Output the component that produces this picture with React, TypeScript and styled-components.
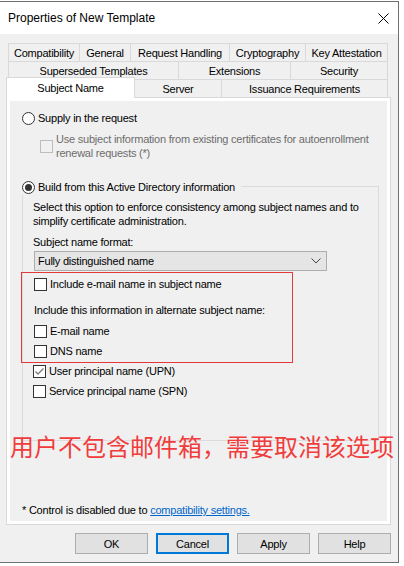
import React from "react";
import styled, { createGlobalStyle, css } from "styled-components";

const GlobalStyle = createGlobalStyle`
  html, body { margin: 0; padding: 0; background: #ffffff; }
  body {
    font-family: "Liberation Sans", Arial, sans-serif;
    font-size: 11px;
    letter-spacing: -0.22px;
    color: #000;
  }
  * { box-sizing: border-box; }
`;

const Screen = styled.div`
  padding-top: 1px;
  width: 404px;
  height: 566px;
  background: #fff;
`;

const Window = styled.div`
  position: relative;
  width: 399px;
  height: 562px;
  border-top: 1px solid #6f6f6f;
  border-right: 1px solid #6f6f6f;
  border-bottom: 1px solid #6f6f6f;
  display: flex;
  flex-direction: column;
  background: #f0f0f0;
`;

const TitleBar = styled.div`
  height: 32px;
  background: #fff;
  display: flex;
  align-items: center;
  justify-content: space-between;
  padding: 0 8px 0 8px;
  font-size: 12px;
  letter-spacing: 0;
`;

const CloseButton = styled.div`
  width: 12px;
  height: 12px;
  margin-right: 1px;
  display: flex;
  align-items: center;
  justify-content: center;
`;

const Body = styled.div`
  flex: 1;
  display: flex;
  flex-direction: column;
  padding: 9px 7px 8px 6px;
`;

const TabStrip = styled.div`
  display: flex;
  flex-direction: column;
  padding-left: 2px;
`;

const TabRow = styled.div`
  display: flex;
  height: 18px;
`;

const Tab = styled.div<{ $w: number; $selected?: boolean }>`
  width: ${(p) => p.$w}px;
  height: 18px;
  border: 1px solid #d9d9d9;
  border-bottom: none;
  margin-left: -1px;
  &:first-child { margin-left: 0; }
  display: flex;
  align-items: center;
  justify-content: center;
  background: #f0f0f0;
  white-space: nowrap;
  padding-top: 1px;
  ${(p) =>
    p.$selected &&
    css`
      &:first-child { margin-left: -2px; }
      margin-top: -2px;
      height: 21px;
      background: #fff;
      position: relative;
      z-index: 1;
      padding-top: 0;
    `}
`;

const Panel = styled.div`
  height: 428px;
  width: 385px;
  border: 1px solid #d9d9d9;
  background: #fff;
  padding: 3px;
`;

const Page = styled.div`
  height: 100%;
  background: #f0f0f0;
  display: flex;
  flex-direction: column;
  padding: 9px 0 4px 12px;
`;

const OptionRow = styled.div<{ $indent?: number; $mt?: number }>`
  display: flex;
  align-items: center;
  min-height: 16px;
  margin-left: ${(p) => p.$indent ?? 0}px;
  margin-top: ${(p) => p.$mt ?? 0}px;
`;

const Radio = styled.span<{ $checked?: boolean }>`
  width: 13px;
  height: 13px;
  border-radius: 50%;
  border: 1px solid #333;
  background: #fff;
  flex: none;
  display: flex;
  align-items: center;
  justify-content: center;
  &::after {
    content: "";
    display: ${(p) => (p.$checked ? "block" : "none")};
    width: 7px;
    height: 7px;
    border-radius: 50%;
    background: #333;
  }
`;

const Box = styled.span<{ $disabled?: boolean }>`
  width: 13px;
  height: 13px;
  border: 1px solid ${(p) => (p.$disabled ? "#bcbcbc" : "#333")};
  background: ${(p) => (p.$disabled ? "#f0f0f0" : "#fff")};
  flex: none;
  display: flex;
  align-items: center;
  justify-content: center;
`;

const Label = styled.span<{ $gap?: number; $disabled?: boolean }>`
  margin-left: ${(p) => p.$gap ?? 3}px;
  line-height: 14px;
  color: ${(p) => (p.$disabled ? "#6d6d6d" : "#000")};
  white-space: nowrap;
`;

const GroupBox = styled.div`
  position: relative;
  margin-top: 26px;
  width: 357px;
  height: 255px;
  border: 1px solid #dcdcdc;
  padding: 13px 0 0 10px;
  display: flex;
  flex-direction: column;
`;

const GroupCaption = styled.div`
  position: absolute;
  top: -8px;
  left: -1px;
  padding-right: 6px;
  background: #f0f0f0;
  display: flex;
  align-items: center;
  height: 16px;
`;

const Para = styled.div<{ $mt?: number }>`
  line-height: 14px;
  margin-top: ${(p) => p.$mt ?? 0}px;
  white-space: nowrap;
`;

const Select = styled.div`
  margin-top: 2px;
  margin-left: 1px;
  width: 293px;
  height: 20px;
  background: #e5e5e5;
  border: 1px solid #adadad;
  display: flex;
  align-items: center;
  justify-content: space-between;
  padding: 0 5px 0 3px;
`;

const Highlight = styled.div`
  margin-top: 1px;
  margin-left: -12px;
  width: 272px;
  height: 91px;
  border: 1px solid #e3393c;
  padding: 1px 0 0 12px;
  display: flex;
  flex-direction: column;
`;

const CheckRow = styled.div<{ $mt?: number }>`
  display: flex;
  align-items: center;
  height: 20px;
  white-space: nowrap;
  margin-top: ${(p) => p.$mt ?? 0}px;
`;

const Footnote = styled.div`
  margin-top: auto;
  line-height: 14px;
  white-space: nowrap;
`;

const Link = styled.span`
  color: #0066cc;
  text-decoration: underline;
`;

const ButtonRow = styled.div`
  margin-top: 8px;
  display: flex;
  justify-content: flex-end;
  gap: 8px;
`;

const Button = styled.div<{ $default?: boolean }>`
  width: 73px;
  height: 21px;
  background: #e1e1e1;
  border: ${(p) => (p.$default ? "2px solid #0078d7" : "1px solid #adadad")};
  display: flex;
  align-items: center;
  justify-content: center;
`;

const Annotation = styled.div`
  position: absolute;
  left: 10px;
  top: 430px;
  font-family: "Noto Sans CJK SC", "Noto Sans", sans-serif;
  font-size: 24px;
  line-height: 28px;
  letter-spacing: 0;
  color: #f03c3c;
  white-space: nowrap;
`;

const tabs1 = [
  ["Compatibility", 72],
  ["General", 52],
  ["Request Handling", 100],
  ["Cryptography", 77],
  ["Key Attestation", 83],
] as const;
const tabs2 = [
  ["Superseded Templates", 171],
  ["Extensions", 113],
  ["Security", 98],
] as const;

const Check = () => (
  <svg width="11" height="11" viewBox="0 0 11 11">
    <polyline points="1.5,5.5 4,8 9.5,2.5" fill="none" stroke="#7a7a7a" strokeWidth="1.3" />
  </svg>
);

export default function App() {
  return (
    <Screen>
      <GlobalStyle />
      <Window>
        <TitleBar>
          <span>Properties of New Template</span>
          <CloseButton>
            <svg width="11" height="11" viewBox="0 0 11 11">
              <path d="M0.5 0.5 L10.5 10.5 M10.5 0.5 L0.5 10.5" stroke="#000" strokeWidth="1" />
            </svg>
          </CloseButton>
        </TitleBar>
        <Body>
          <TabStrip>
            <TabRow>
              {tabs1.map(([t, w]) => (
                <Tab key={t} $w={w}>{t}</Tab>
              ))}
            </TabRow>
            <TabRow>
              {tabs2.map(([t, w]) => (
                <Tab key={t} $w={w}>{t}</Tab>
              ))}
            </TabRow>
            <TabRow>
              <Tab $w={129} $selected>Subject Name</Tab>
              <Tab $w={88}>Server</Tab>
              <Tab $w={167}>Issuance Requirements</Tab>
            </TabRow>
          </TabStrip>
          <Panel>
            <Page>
              <OptionRow>
                <Radio />
                <Label>Supply in the request</Label>
              </OptionRow>
              <OptionRow $indent={18} $mt={6}>
                <Box $disabled />
                <Label $gap={3} $disabled>
                  Use subject information from existing certificates for autoenrollment
                  <br />
                  renewal requests (*)
                </Label>
              </OptionRow>
              <GroupBox>
                <GroupCaption>
                  <Radio $checked />
                  <Label>Build from this Active Directory information</Label>
                </GroupCaption>
                <Para>
                  Select this option to enforce consistency among subject names and to
                  <br />
                  simplify certificate administration.
                </Para>
                <Para $mt={7}>Subject name format:</Para>
                <Select>
                  <span>Fully distinguished name</span>
                  <svg width="10" height="6" viewBox="0 0 10 6">
                    <polyline points="0.5,0.5 5,5 9.5,0.5" fill="none" stroke="#444" strokeWidth="1" />
                  </svg>
                </Select>
                <Highlight>
                  <CheckRow>
                    <Box />
                    <Label>Include e-mail name in subject name</Label>
                  </CheckRow>
                  <CheckRow $mt={6}>Include this information in alternate subject name:</CheckRow>
                  <CheckRow $mt={1}>
                    <Box />
                    <Label>E-mail name</Label>
                  </CheckRow>
                  <CheckRow>
                    <Box />
                    <Label>DNS name</Label>
                  </CheckRow>
                </Highlight>
                <CheckRow $mt={-2}>
                  <Box>
                    <Check />
                  </Box>
                  <Label>User principal name (UPN)</Label>
                </CheckRow>
                <CheckRow>
                  <Box />
                  <Label>Service principal name (SPN)</Label>
                </CheckRow>
              </GroupBox>
              <Footnote>
                * Control is disabled due to <Link>compatibility settings.</Link>
              </Footnote>
            </Page>
          </Panel>
          <ButtonRow>
            <Button>OK</Button>
            <Button $default>Cancel</Button>
            <Button>Apply</Button>
            <Button>Help</Button>
          </ButtonRow>
        </Body>
        <Annotation>用户不包含邮件箱，需要取消该选项</Annotation>
      </Window>
    </Screen>
  );
}
